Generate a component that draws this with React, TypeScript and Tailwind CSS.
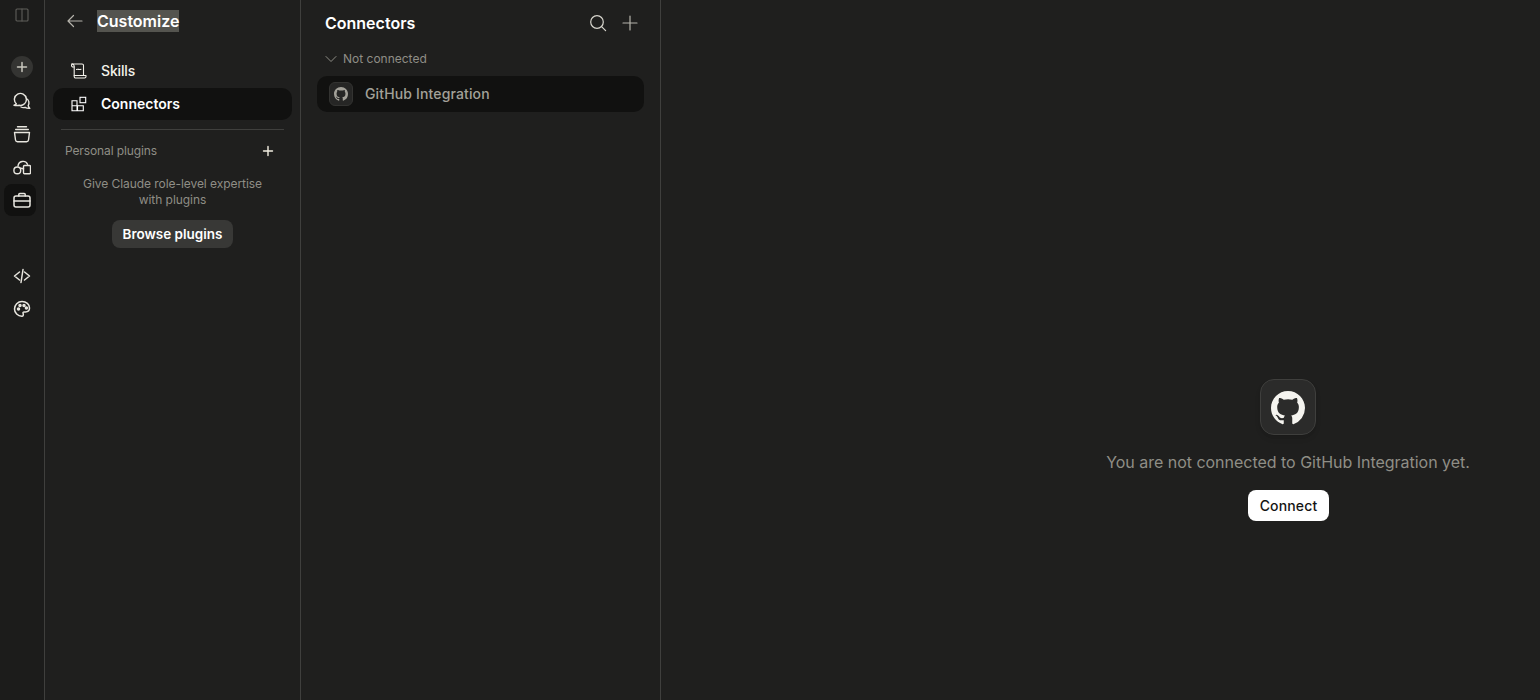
import React from "react";

const ic = { fill: "none", stroke: "currentColor", strokeWidth: 1.25, strokeLinecap: "round" as const, strokeLinejoin: "round" as const };

const GH = "M8 0C3.58 0 0 3.58 0 8c0 3.54 2.29 6.53 5.47 7.59.4.07.55-.17.55-.38 0-.19-.01-.82-.01-1.49-2.01.37-2.53-.49-2.69-.94-.09-.23-.48-.94-.82-1.13-.28-.15-.68-.52-.01-.53.63-.01 1.08.58 1.23.82.72 1.21 1.87.87 2.33.66.07-.52.28-.87.51-1.07-1.78-.2-3.64-.89-3.64-3.95 0-.87.31-1.59.82-2.15-.08-.2-.36-1.02.08-2.12 0 0 .67-.21 2.2.82.64-.18 1.32-.27 2-.27s1.36.09 2 .27c1.53-1.04 2.2-.82 2.2-.82.44 1.1.16 1.92.08 2.12.51.56.82 1.27.82 2.15 0 3.07-1.87 3.75-3.65 3.95.29.25.54.73.54 1.48 0 1.07-.01 1.93-.01 2.2 0 .21.15.46.55.38A8.01 8.01 0 0 0 16 8c0-4.42-3.58-8-8-8z";

function GitHub({ size, className }: { size: number; className?: string }) {
  return (
    <svg width={size} height={size} viewBox="0 0 16 16" fill="currentColor" className={className}>
      <path d={GH} />
    </svg>
  );
}

function RailBtn({ children, active }: { children: React.ReactNode; active?: boolean }) {
  return (
    <div className={`w-8 h-8 ml-1 pl-1 flex items-center justify-center rounded-lg text-[#e8e6df] ${active ? "bg-[#111110]" : ""}`}>
      {children}
    </div>
  );
}

function Rail() {
  return (
    <div className="w-[45px] shrink-0 h-full border-r border-[#3f3f3d] flex flex-col items-stretch pr-px">
      <div className="h-[30px] flex items-center justify-center text-[#5f5e5a]">
        <svg width="14" height="14" viewBox="0 0 14 14" {...ic} strokeWidth={1.1}>
          <rect x="1" y="1" width="12" height="12" rx="1" />
          <path d="M7 1v12" />
        </svg>
      </div>
      <div className="h-[21px]" />
      <div className="h-8 flex items-center justify-center">
        <div className="w-[22px] h-[22px] rounded-full bg-[#343432] flex items-center justify-center text-[#c9c7bf]">
          <svg width="12" height="12" viewBox="0 0 12 12" fill="none" stroke="currentColor" strokeWidth="1.5" strokeLinecap="round">
            <path d="M6 1.5v9M1.5 6h9" />
          </svg>
        </div>
      </div>
      <div className="h-[2px]" />
      <RailBtn>
        <svg width="18" height="18" viewBox="0 0 18 18" {...ic} strokeWidth={1.4}>
          <path d="M3.3 11.8A6 6 0 1 1 6.2 13.3C4.5 13.6 2.8 13.6 1 13.3 2.2 13 3 12.6 3.3 11.8z" />
          <path d="M13.4 6.5A5 5 0 0 1 15.2 13.5C15.5 14.8 16 15.8 16.8 16.3 14.8 16.5 13.2 16 12 15.3A5 5 0 0 1 8 15" />
        </svg>
      </RailBtn>
      <div className="h-[1px]" />
      <RailBtn>
        <svg width="18" height="18" viewBox="0 0 18 18" {...ic} strokeWidth={1.4}>
          <path d="M4.5 1.7h9M2.7 4.5h12.6" />
          <path d="M1.5 7.5h15l-1 7.5a2 2 0 0 1-2 1.7h-9a2 2 0 0 1-2-1.7z" />
        </svg>
      </RailBtn>
      <div className="h-[1px]" />
      <RailBtn>
        <svg width="18" height="18" viewBox="0 0 18 18" {...ic} strokeWidth={1.4}>
          <circle cx="4.3" cy="12.4" r="3.4" />
          <path d="M5 8A5 5 0 0 1 14.5 6.3" />
          <rect x="10.5" y="7.5" width="7" height="8.3" rx="1" />
          <path d="M7.5 10.2l3 .5" />
        </svg>
      </RailBtn>
      <div className="h-[1px]" />
      <RailBtn active>
        <svg width="18" height="18" viewBox="0 0 18 18" {...ic} strokeWidth={1.5}>
          <rect x="1" y="5" width="16" height="11" rx="2" />
          <path d="M5.8 5V3.5a1 1 0 0 1 1-1h4.4a1 1 0 0 1 1 1V5" />
          <path d="M1 10h16" />
        </svg>
      </RailBtn>
      <div className="h-[44px]" />
      <RailBtn>
        <svg width="18" height="18" viewBox="0 0 18 18" {...ic} strokeWidth={1.5}>
          <path d="M6.5 5L1.5 9l5 4M11.5 5l5 4-5 4M10 2.5L8 15.5" />
        </svg>
      </RailBtn>
      <div className="h-[1px]" />
      <RailBtn>
        <svg width="18" height="18" viewBox="0 0 18 18" {...ic} strokeWidth={1.5}>
          <path d="M9 1.5c4.3 0 7.5 2.9 7.5 6.5 0 2.5-1.9 3.9-4 3.9h-1.4c-.9 0-1.4.7-1 1.5.5 1 .3 2.9-1.3 2.9-4 0-7.3-3.5-7.3-7.4S4.8 1.5 9 1.5z" />
          <circle cx="5.5" cy="9" r="1" fill="currentColor" />
          <circle cx="7" cy="5.6" r="1" fill="currentColor" />
          <circle cx="11" cy="5.4" r="1" fill="currentColor" />
          <circle cx="13.4" cy="8" r="1" fill="currentColor" />
        </svg>
      </RailBtn>
    </div>
  );
}

function Sidebar() {
  return (
    <div className="w-[256px] shrink-0 h-full border-r border-[#3f3f3d] px-2 flex flex-col">
      <div className="h-[43px] flex items-center pl-[13px] pb-[1px]">
        <svg width="18" height="18" viewBox="0 0 18 18" className="text-[#b5b3ab]" {...ic} strokeWidth={1.2}>
          <path d="M16 9H2M7.5 3.5L2 9l5.5 5.5" />
        </svg>
        <span className="ml-[13px] text-[16px] leading-[22px] font-semibold text-white bg-[#54544f] -mt-[1px]">Customize</span>
      </div>
      <div className="h-[11px]" />
      <div className="h-[34px] pb-[1px] flex items-center pl-[18px] text-[#f3f1ea]">
        <svg width="16" height="16" viewBox="0 0 16 16" {...ic} strokeWidth={1.1}>
          <path d="M1 1h10a1.5 1.5 0 0 1 1.5 1.5V12" />
          <path d="M1 1c1.2 0 2 .8 2.2 2v9.5" />
          <path d="M1 1c-.6 1-.3 2.5.5 3H3" />
          <path d="M3.2 12.5H15v1a1.5 1.5 0 0 1-1.5 1.5H4.7A1.5 1.5 0 0 1 3.2 13.5z" />
          <path d="M5.5 6.5c1.5-.8 2.5.6 4.5-.2" />
        </svg>
        <span className="ml-[14px] text-[14px] font-medium tracking-[-0.01em]">Skills</span>
      </div>
      <div className="h-8 flex items-center pl-[18px] rounded-[10px] bg-[#111110] text-white">
        <svg width="16" height="16" viewBox="0 0 16 16" {...ic} strokeWidth={1.1} strokeLinejoin="miter">
          <path d="M1 4.7h5v10H1zM1 9.7h11.3v5H6.5M6.5 9.7v5" />
          <rect x="9" y="1.3" width="5.7" height="5.4" />
        </svg>
        <span className="ml-[14px] mb-[2px] text-[14px] font-semibold">Connectors</span>
      </div>
      <div className="h-[9px]" />
      <div className="h-px mx-2 bg-[#3f3f3d]" />
      <div className="h-[42px] flex items-center pl-[12px] pr-[18px] justify-between">
        <span className="text-[12px] text-[#8f8e86] tracking-[-0.01em]">Personal plugins</span>
        <svg width="12" height="12" viewBox="0 0 12 12" fill="none" stroke="#f3efe2" strokeWidth="1.4" strokeLinecap="round">
          <path d="M6 1.5v9M1.5 6h9" />
        </svg>
      </div>
      <p className="mt-[4px] text-center text-[12px] leading-[16px] text-[#8f8e86] px-6 tracking-[-0.005em]">
        Give Claude role-level expertise with plugins
      </p>
      <div className="mt-[12px] flex justify-center">
        <div className="h-7 px-[11px] rounded-lg bg-[#383836] text-white text-[13.5px] font-semibold flex items-center">Browse plugins</div>
      </div>
    </div>
  );
}

function ListPane() {
  return (
    <div className="w-[360px] shrink-0 h-full border-r border-[#3f3f3d] px-4 flex flex-col">
      <div className="h-[46px] flex items-center justify-between pl-2 pr-[6px]">
        <span className="text-[16px] font-semibold text-white">Connectors</span>
        <div className="flex items-center gap-[15px] text-[#d8d6ce]">
          <svg width="18" height="18" viewBox="0 0 18 18" {...ic} strokeWidth={1.2}>
            <circle cx="8" cy="8" r="6.3" />
            <path d="M12.6 12.6l4 4" />
          </svg>
          <svg width="16" height="16" viewBox="0 0 16 16" {...ic} strokeWidth={1.2} className="text-[#b5b3ab]">
            <path d="M8 1v14M1 8h14" />
          </svg>
        </div>
      </div>
      <div className="h-[25px] flex items-center pl-2 text-[#8f8e86]">
        <svg width="12" height="12" viewBox="0 0 12 12" {...ic} strokeWidth={1}>
          <path d="M1 3.5L6 8.5l5-5" />
        </svg>
        <span className="ml-[6px] text-[12px]">Not connected</span>
      </div>
      <div className="mt-[5px] h-9 rounded-[10px] bg-[#111110] flex items-center pl-3">
        <div className="w-6 h-6 rounded-md bg-[#262625] border border-[#333331] flex items-center justify-center text-[#a3a199]">
          <GitHub size={14} />
        </div>
        <span className="ml-3 mb-[2px] text-[14px] font-medium text-[#a3a199] tracking-[0.01em]">GitHub Integration</span>
      </div>
    </div>
  );
}

function Empty() {
  return (
    <div className="flex-1 h-full flex justify-end pr-[70px]">
      <div className="flex flex-col items-center pt-[379px] w-[364px]">
        <div className="w-14 h-14 rounded-[14px] bg-[#2b2b2a] border border-[#3f3f3d] shadow-md flex items-center justify-center text-[#f5f4ef]">
          <GitHub size={34} className="mt-[2px]" />
        </div>
        <div className="mt-[15px] text-[16px] leading-[24px] text-[#8f8e86] whitespace-nowrap tracking-[-0.02px]">You are not connected to GitHub Integration yet.</div>
        <div className="mt-[16px] ml-px w-[81px] h-[31px] justify-center rounded-lg bg-white text-[#141413] text-[14px] font-medium flex items-center tracking-[0.01em]">Connect</div>
      </div>
    </div>
  );
}

export default function App() {
  return (
    <div className="h-[700px] w-full overflow-hidden flex bg-[#1f1f1e] font-['Inter','Liberation_Sans',sans-serif]">
      <div className="h-full shrink-0 bg-[#1c1c1b]">
        <Rail />
      </div>
      <Sidebar />
      <ListPane />
      <Empty />
    </div>
  );
}
